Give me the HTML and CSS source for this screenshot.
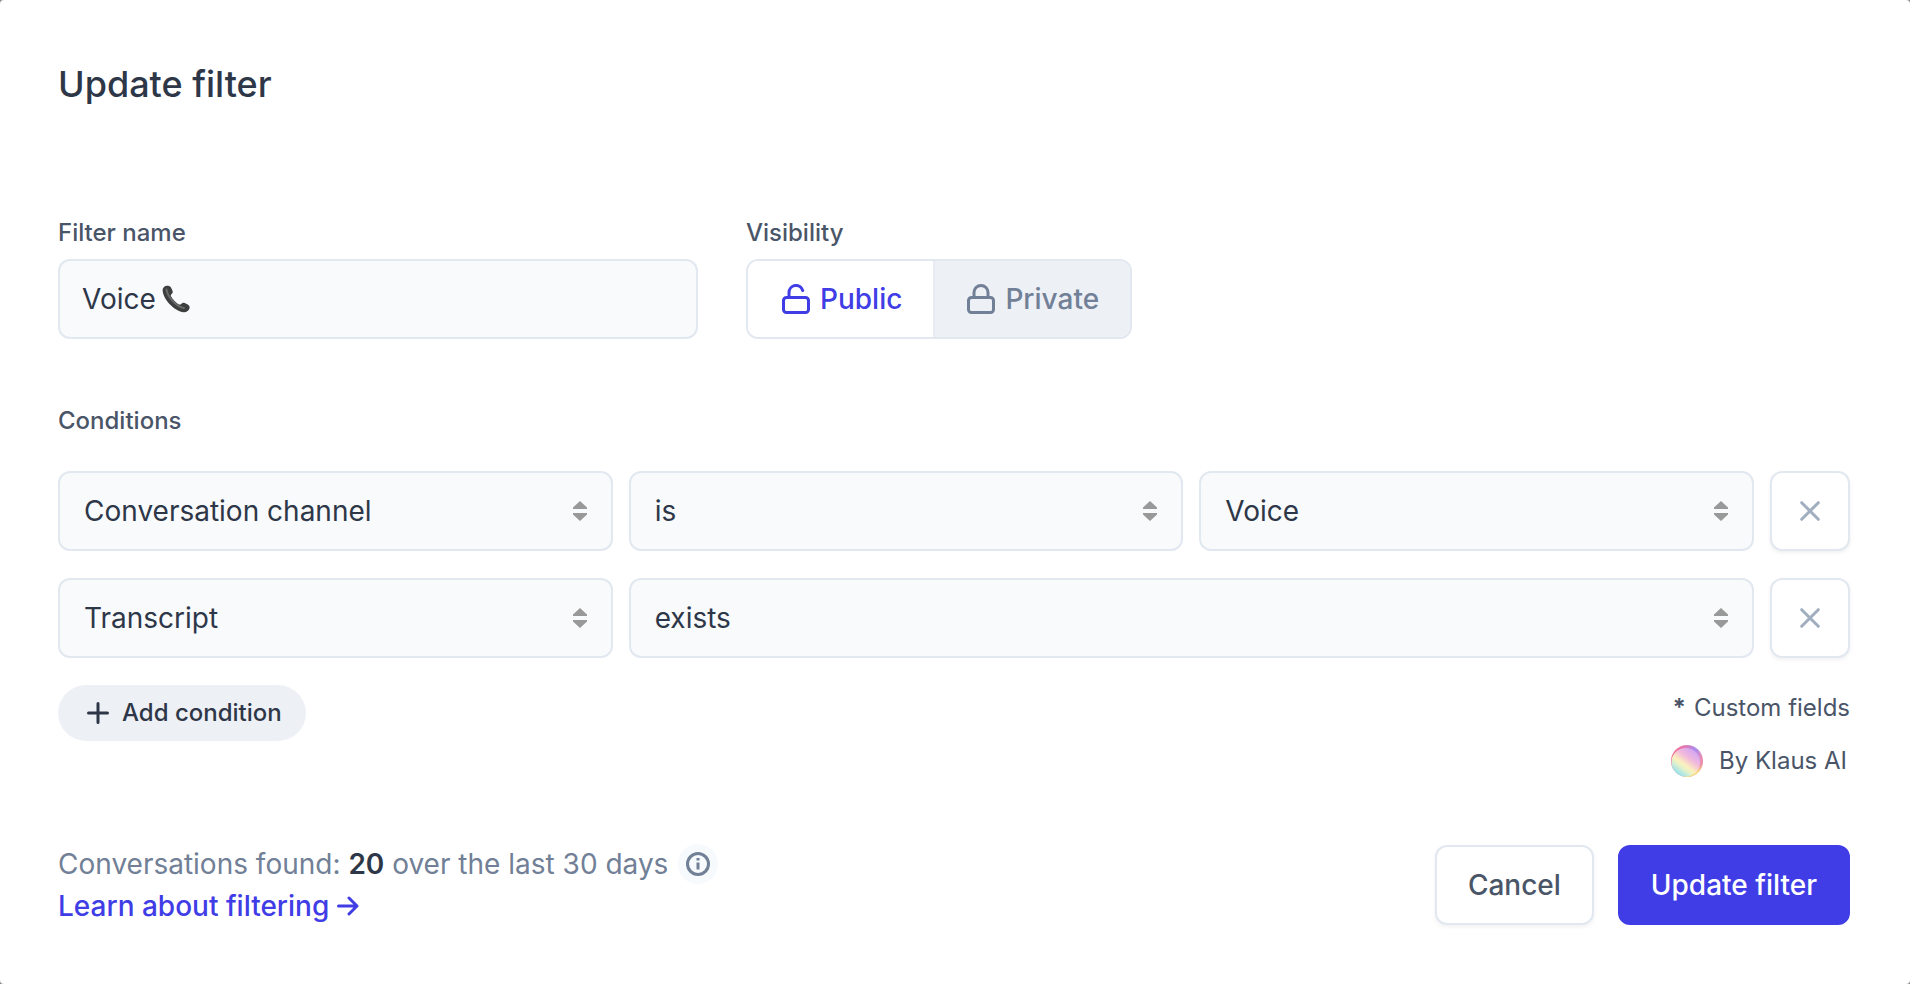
FILE: index.html
```html
<!DOCTYPE html>
<html lang="en">
<head>
<meta charset="utf-8">
<title>Update filter</title>
<link rel="stylesheet" href="styles.css">
</head>
<body>
<svg class="sprite" aria-hidden="true">
  <symbol id="arrows" viewBox="0 0 14 20"><path d="M7 0 14 6.500V8H0V6.500zM7 20l7-6.500V12H0v1.500z"/></symbol>
  <symbol id="cross" viewBox="0 0 20 20"><path d="M1.700 1.700 18.300 18.300M18.300 1.700 1.700 18.300"/></symbol>
</svg>
<form class="dialog">
  <h1 class="title">Update filter</h1>

  <div class="top">
    <div class="group name-group">
      <label class="label" for="name">Filter name</label>
      <div class="field name-field">
        <input class="name-input" id="name" type="text" value="Voice">
        <svg class="phone" viewBox="0 0 28 28" role="img" aria-label="telephone">
          <path d="M4.500.7C2.400.9.500 3 .6 5.200c.3 4.800 3.400 10.300 7.400 14.200 4.200 4.100 9.200 7.400 13.600 7.900 2.700.3 5.500-1.800 6-4.300.3-1.500-.5-2.700-1.900-3.500l-3-1.500c-1.300-.6-2.300-.3-3.300.7-.8.9-1.900 1.200-3 .5-3.200-2-5.800-4.800-7.400-7.900-.4-.9-.1-1.700.7-2.300 1.100-.9 1.300-2 .8-3.300L9 2.500C8.200 1 6.400.5 4.500.7z"/>
          <path class="phone-shine" d="M4.500 4.500c.5 4.500 3.600 8.900 7.300 12.600 3 3 6.300 5.300 10.200 6"/>
        </svg>
      </div>
    </div>
    <fieldset class="group visibility">
      <legend class="label">Visibility</legend>
      <div class="segments">
        <button class="segment active" type="button" aria-pressed="true">
          <svg class="lock" viewBox="0 0 28 30"><rect x="1.500" y="13.500" width="25" height="15" rx="3"/><path d="M7 13V8.500a7 7 0 0 1 13.700-2"/></svg>
          Public
        </button>
        <button class="segment" type="button" aria-pressed="false">
          <svg class="lock" viewBox="0 0 28 30"><rect x="1.500" y="13.500" width="25" height="15" rx="3"/><path d="M7 13V8.500a7 7 0 0 1 14 0V13"/></svg>
          Private
        </button>
      </div>
    </fieldset>
  </div>

  <h2 class="label conditions-title">Conditions</h2>
  <div class="conditions">
    <div class="row">
      <div class="picker"><select class="field select" aria-label="Field"><option>Conversation channel</option></select><svg class="arrows"><use href="#arrows"/></svg></div>
      <div class="picker"><select class="field select" aria-label="Operator"><option>is</option></select><svg class="arrows"><use href="#arrows"/></svg></div>
      <div class="picker"><select class="field select" aria-label="Value"><option>Voice</option></select><svg class="arrows"><use href="#arrows"/></svg></div>
      <button class="button remove" type="button" aria-label="Remove condition"><svg class="cross"><use href="#cross"/></svg></button>
    </div>
    <div class="row">
      <div class="picker"><select class="field select" aria-label="Field"><option>Transcript</option></select><svg class="arrows"><use href="#arrows"/></svg></div>
      <div class="picker wide"><select class="field select" aria-label="Operator"><option>exists</option></select><svg class="arrows"><use href="#arrows"/></svg></div>
      <button class="button remove" type="button" aria-label="Remove condition"><svg class="cross"><use href="#cross"/></svg></button>
    </div>
  </div>

  <div class="below">
    <button class="add" type="button">
      <svg class="plus" viewBox="0 0 22 22"><path d="M11 1.500v19M1.500 11h19"/></svg>
      Add condition
    </button>
    <ul class="legend">
      <li class="legend-item custom"><span class="star">*</span>Custom fields</li>
      <li class="legend-item klaus">
        <svg class="orb" viewBox="0 0 32 32" aria-hidden="true">
          <defs>
            <linearGradient id="rim" x1="0" y1=".3" x2="1" y2=".7"><stop offset=".1" stop-color="#f0709a"/><stop offset=".3" stop-color="#e07cb4"/><stop offset=".6" stop-color="#a98bf0"/><stop offset=".85" stop-color="#e88fb8"/><stop offset="1" stop-color="#ee8aa0"/></linearGradient>
            <linearGradient id="glow" x1=".5" y1="0" x2=".5" y2="1"><stop offset=".6" stop-color="#fbe07c" stop-opacity="0"/><stop offset=".85" stop-color="#fbe07c"/></linearGradient>
            <linearGradient id="core" x1=".8" y1=".1" x2=".2" y2=".9"><stop offset="0" stop-color="#d3a6f2"/><stop offset=".32" stop-color="#f2b9dc"/><stop offset=".6" stop-color="#fbf0bd"/><stop offset=".72" stop-color="#e6f2c8"/><stop offset="1" stop-color="#95e0f0"/></linearGradient>
          </defs>
          <circle cx="16" cy="16" r="16" fill="url(#rim)"/>
          <circle cx="16" cy="16" r="16" fill="url(#glow)"/>
          <circle cx="14.800" cy="17.200" r="14.300" fill="url(#core)"/>
        </svg>
        By Klaus AI
      </li>
    </ul>
  </div>

  <footer class="footer">
    <div class="summary">
      <p class="found"><span>Conversations found: <strong class="count">20</strong> over the last 30 days</span>
        <button class="info" type="button" aria-label="More information"><svg class="info-icon" viewBox="0 0 24 24"><circle cx="12" cy="12" r="10.500"/><path d="M12 10.500v7M12 6v2.500"/></svg></button>
      </p>
      <a class="learn" href="#">Learn about filtering <svg class="arrow" viewBox="0 0 22 20"><path d="M1.500 10h18M12 2l8 8-8 8"/></svg></a>
    </div>
    <div class="actions">
      <button class="button cancel" type="button">Cancel</button>
      <button class="button primary" type="submit">Update filter</button>
    </div>
  </footer>
</form>
</body>
</html>
```
FILE: styles.css
```css
* {
  box-sizing: border-box;
}

body {
  margin: 0;
  background: #8c8c8c;
  color: #2d3748;
  font: 400 28px/42px Inter, sans-serif;
}

button,
input,
select {
  margin: 0;
  font: inherit;
  color: inherit;
}

svg {
  display: block;
  flex: none;
}

.sprite {
  display: none;
}

.dialog {
  min-height: 100vh;
  padding: 58px 60px 57px 58px;
  border-radius: 4px;
  background: #fff;
}

.title {
  margin: 0;
  font-size: 36px;
  font-weight: 500;
  line-height: 52px;
}

.top {
  display: flex;
  gap: 48px;
  margin-top: 105px;
}

.group {
  min-width: 0;
  margin: 0;
  padding: 0;
  border: 0;
}

.name-group {
  width: 640px;
}

.label {
  display: block;
  margin: 0 0 8px;
  padding: 0;
  color: #4a5568;
  font-size: 24px;
  font-weight: 500;
  line-height: 36px;
}

.field {
  width: 100%;
  height: 80px;
  border: 2px solid #e2e8f0;
  border-radius: 12px;
  background: #f9fafc;
}

.name-field {
  display: flex;
  align-items: center;
  gap: 6px;
  padding: 0 22px;
}

.name-input {
  padding: 0;
  border: 0;
  outline: 0;
  background: none;
  field-sizing: content;
}

.phone {
  width: 28px;
  height: 28px;
  fill: #3c3f3e;
}

.phone-shine {
  fill: none;
  stroke: #686b6a;
  stroke-width: 2;
  stroke-linecap: round;
}

.segments {
  display: flex;
  height: 80px;
  overflow: hidden;
  border: 2px solid #e2e8f0;
  border-radius: 12px;
}

.segment {
  display: flex;
  align-items: center;
  gap: 10px;
  padding: 0 32px;
  border: 0;
  background: #edf0f5;
  color: #718096;
  font-weight: 500;
}

.segment:last-child {
  padding-right: 31px;
}

.segment.active {
  padding: 0 31px 0 34px;
  border-right: 2px solid #e8ecf2;
  background: #fff;
  color: #403de6;
}

.lock {
  width: 28px;
  height: 30px;
  fill: none;
  stroke: currentColor;
  stroke-width: 3;
  stroke-linecap: round;
}

.conditions-title {
  margin: 64px 0 32px;
}

.conditions {
  display: grid;
  gap: 27px;
}

.row {
  display: grid;
  grid-template-columns: 1fr 1fr 1fr 80px;
  gap: 16px;
}

.picker {
  display: grid;
  align-items: center;
}

.picker > * {
  grid-area: 1 / 1;
}

.wide {
  grid-column: span 2;
}

.select {
  padding: 0 60px 0 24px;
  appearance: none;
}

.arrows {
  width: 14px;
  height: 20px;
  margin-right: 26px;
  justify-self: end;
  fill: #999;
  pointer-events: none;
}

.button {
  display: flex;
  align-items: center;
  justify-content: center;
  height: 80px;
  border: 2px solid #e2e8f0;
  border-radius: 12px;
  background: #fff;
  box-shadow: 0 2px 4px rgba(0, 0, 0, 0.06);
  color: #4a5568;
  font-weight: 500;
}

.cross {
  width: 20px;
  height: 20px;
  fill: none;
  stroke: #a0aec0;
  stroke-width: 3;
  stroke-linecap: round;
}

.below {
  display: flex;
  align-items: flex-start;
  justify-content: space-between;
  margin-top: 27px;
}

.add {
  display: flex;
  align-items: center;
  gap: 13px;
  height: 56px;
  padding: 0 24px 0 29px;
  border: 0;
  border-radius: 28px;
  background: #edf0f5;
  font-size: 24px;
  font-weight: 500;
}

.plus {
  width: 22px;
  height: 22px;
  fill: none;
  stroke: currentColor;
  stroke-width: 3;
  stroke-linecap: round;
}

.legend {
  display: grid;
  gap: 17px;
  margin: 0;
  padding: 5px 0 0;
  list-style: none;
  color: #4a5568;
  font-size: 24px;
  line-height: 36px;
}

.legend-item {
  display: flex;
  align-items: center;
  justify-content: flex-end;
}

.custom {
  gap: 8px;
}

.star {
  font-weight: 700;
}

.klaus {
  gap: 16px;
  padding-right: 3px;
}

.orb {
  width: 32px;
  height: 32px;
}

.footer {
  display: flex;
  align-items: center;
  justify-content: space-between;
  margin-top: 64px;
}

.found {
  display: flex;
  align-items: center;
  gap: 10px;
  margin: 0;
  color: #718096;
}

.count {
  color: #2d3748;
  font-weight: 600;
}

.info {
  display: grid;
  place-items: center;
  width: 40px;
  height: 40px;
  padding: 0;
  border: 0;
  border-radius: 50%;
  background: #f7fafc;
}

.info-icon {
  width: 24px;
  height: 24px;
  fill: none;
  stroke: #718096;
  stroke-width: 3;
}

.learn {
  display: flex;
  align-items: center;
  gap: 8px;
  color: #403de6;
  font-weight: 500;
  text-decoration: none;
}

.arrow {
  width: 22px;
  height: 20px;
  fill: none;
  stroke: currentColor;
  stroke-width: 3;
  stroke-linecap: round;
  stroke-linejoin: round;
}

.actions {
  display: flex;
  gap: 24px;
}

.cancel,
.primary {
  padding: 0 31px;
}

.primary {
  border-color: #403de6;
  background: #403de6;
  box-shadow: none;
  color: #fff;
}
```
